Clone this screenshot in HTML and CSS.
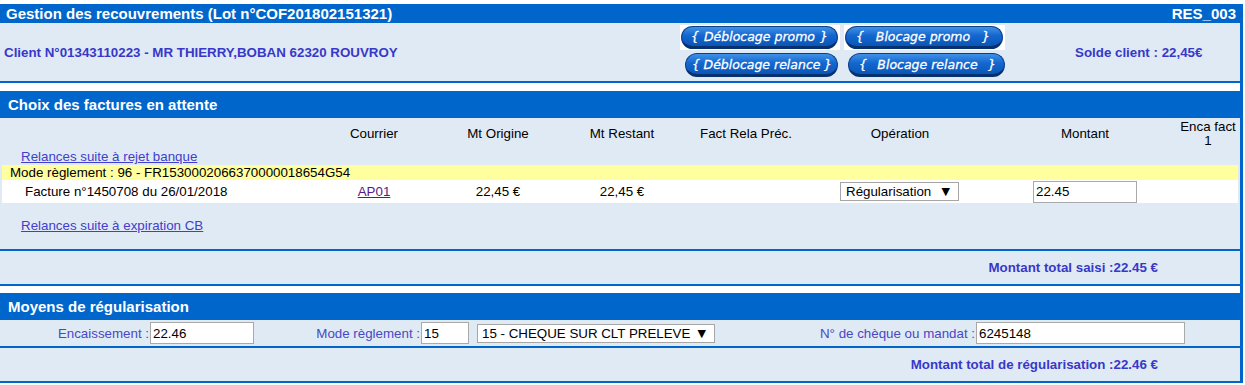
FILE: index.html
```html
<html>
<head>
<title>Gestion des recouvrements</title>
<meta http-equiv="Content-Type" content="text/html; charset=UTF-8">
<link rel="stylesheet" href="styles.css">
</head>
<body>
<div class="page">

 <div class="section">
  <div class="title-bar title-bar-small">
   <span>Gestion des recouvrements (Lot n°COF201802151321)</span>
   <span>RES_003</span>
  </div>
  <div class="client-row">
   <div class="client-text">Client N°01343110223 - MR THIERRY,BOBAN 62320 ROUVROY</div>
   <div class="button-block">
    <div class="button-line">
     <span class="pill-frame"><a class="pill pill-a" href="#"><span>{</span><span>Déblocage promo</span><span>}</span></a></span>
     <span class="pill-frame"><a class="pill pill-b" href="#"><span>{</span><span>Blocage promo</span><span>}</span></a></span>
    </div>
    <div class="button-line">
     <a class="pill pill-c" href="#"><span>{</span><span>Déblocage relance</span><span>}</span></a>
     <a class="pill pill-d" href="#"><span>{</span><span>Blocage relance</span><span>}</span></a>
    </div>
   </div>
   <div class="solde-text">Solde client : 22,45€</div>
  </div>
 </div>

 <div class="section-gap"></div>

 <div class="section">
  <div class="title-bar">Choix des factures en attente</div>
  <div class="invoice-area">
   <div class="invoice-cols invoice-head">
    <div></div>
    <div>Courrier</div>
    <div>Mt Origine</div>
    <div>Mt Restant</div>
    <div>Fact Rela Préc.</div>
    <div>Opération</div>
    <div>Montant</div>
    <div>Enca fact<br>1</div>
   </div>
   <div class="link-line"><a href="#">Relances suite à rejet banque</a></div>
   <div class="mode-line">Mode règlement : 96 - FR1530002066370000018654G54</div>
   <div class="invoice-cols invoice-row">
    <div class="invoice-label">Facture n°1450708 du 26/01/2018</div>
    <div><a class="visited-link" href="#">AP01</a></div>
    <div>22,45 €</div>
    <div>22,45 €</div>
    <div></div>
    <div><span class="fake-select op-select"><span>Régularisation</span><span class="arrow">▼</span></span></div>
    <div><input class="text-input amount-input" type="text" value="22.45"></div>
    <div></div>
   </div>
   <div class="link-line link-line-2"><a href="#">Relances suite à expiration CB</a></div>
  </div>
  <div class="total-row">Montant total saisi :22.45 €</div>
 </div>

 <div class="section-gap section-gap-2"></div>

 <div class="section">
  <div class="title-bar">Moyens de régularisation</div>
  <div class="form-row">
   <label class="form-label">Encaissement :</label>
   <div><input class="text-input enc-input" type="text" value="22.46"></div>
   <label class="form-label">Mode règlement :</label>
   <div class="mode-fields">
    <input class="text-input code-input" type="text" value="15">
    <span class="fake-select mode-select"><span>15 - CHEQUE SUR CLT PRELEVE</span><span class="arrow">▼</span></span>
   </div>
   <label class="form-label">N° de chèque ou mandat :</label>
   <div><input class="text-input cheque-input" type="text" value="6245148"></div>
  </div>
  <div class="total-row">Montant total de régularisation :22.46 €</div>
 </div>

</div>
</body>
</html>
```

FILE: styles.css
```css
body {
 margin: 0;
 padding-top: 4px;
 background-color: #ffffff;
 font-family: "Liberation Sans", Arial, sans-serif;
 font-size: 10pt;
 color: #000000;
}
a:link {
 color: #4040cc;
}
.page {
 width: 1240px;
 border-right: 3px solid #0066cc;
}
.section {
 background-color: #e0eaf5;
}
.section-gap {
 height: 8px;
 background-color: #ffffff;
}
.section-gap-2 {
 height: 7px;
}
.title-bar {
 height: 27px;
 background-color: #0066cc;
 color: #ffffff;
 font-size: 15px;
 font-weight: bold;
 padding-left: 8px;
 display: flex;
 align-items: center;
}
.title-bar-small {
 height: 19px;
 padding-left: 6px;
 padding-right: 4px;
 justify-content: space-between;
}
.client-row {
 height: 58px;
 border-bottom: 2px solid #0066cc;
 display: grid;
 grid-template-columns: 680px 325px 1fr;
 align-items: center;
}
.client-text {
 padding-left: 4px;
 font-weight: bold;
 color: #3838c8;
}
.solde-text {
 padding-left: 70px;
 font-weight: bold;
 color: #3838c8;
}
.button-block {
 align-self: start;
 margin-top: 2px;
 display: flex;
 flex-direction: column;
 gap: 3px;
}
.button-line {
 display: flex;
 align-items: center;
}
.pill-frame {
 background-color: #ffffff;
 padding: 1px 2px 1px 1px;
 margin-right: 4px;
 display: flex;
}
.pill {
 height: 20px;
 box-sizing: border-box;
 border: 1px solid #0a3f8c;
 border-bottom: 3px solid #06306e;
 border-radius: 12px;
 background: linear-gradient(#3f92e6, #1467cf 45%, #0a56b8);
 color: #ffffff;
 font-family: "DejaVu Sans", Verdana, sans-serif;
 font-style: italic;
 font-size: 12.5px;
 -webkit-text-stroke: 0.3px #ffffff;
 text-decoration: none;
 display: flex;
 align-items: center;
 justify-content: space-between;
 padding: 0 9px 0 10px;
}
a.pill:link {
 color: #ffffff;
}
.pill-a {
 width: 157px;
 height: 23px;
 padding-left: 9px;
 padding-right: 9px;
}
.pill-b {
 width: 158px;
 height: 23px;
 padding-left: 10px;
 padding-right: 12px;
}
.pill-c {
 width: 153px;
 height: 24px;
 margin-left: 5px;
 padding: 0 5px 0 6px;
}
.pill-d {
 width: 157px;
 height: 24px;
 margin-left: 10px;
 padding: 0 8px 0 10px;
}
.invoice-area {
 height: 131px;
 border-bottom: 2px solid #0066cc;
 padding: 0 2px;
}
.invoice-cols {
 display: grid;
 grid-template-columns: 310px 124px 124px 124px 124px 184px 186px 60px;
 align-items: center;
 text-align: center;
}
.invoice-head {
 height: 31px;
 line-height: 14px;
}
.link-line {
 height: 16px;
 line-height: 16px;
 padding-left: 19px;
}
.link-line-2 {
 margin-top: 15px;
}
.mode-line {
 height: 15px;
 line-height: 15px;
 background-color: #ffffa0;
 padding-left: 8px;
}
.invoice-row {
 height: 23px;
 background-color: #ffffff;
}
.invoice-label {
 text-align: left;
 padding-left: 23px;
}
.visited-link:link {
 color: #551a8b;
}
.text-input {
 font-family: "Liberation Sans", Arial, sans-serif;
 font-size: 10pt;
 height: 22px;
 box-sizing: border-box;
 border: 1px solid #a9a9a9;
 padding: 1px 2px;
 margin: 0;
 background-color: #ffffff;
 color: #000000;
}
.amount-input {
 width: 104px;
 display: block;
 margin: 0 auto;
}
.fake-select {
 display: flex;
 align-items: center;
 justify-content: space-between;
 box-sizing: border-box;
 border: 1px solid #a6a6a6;
 background-color: #ffffff;
 text-align: left;
}
.arrow {
 font-family: "DejaVu Sans", sans-serif;
 font-size: 11px;
}
.op-select {
 width: 119px;
 height: 19px;
 margin-left: 32px;
 padding: 0 8px 0 5px;
}
.form-row {
 height: 26px;
 border-bottom: 2px solid #0066cc;
 display: grid;
 grid-template-columns: 149px 168px 103px 400px 155px 1fr;
 align-items: center;
}
.form-label {
 justify-self: end;
 white-space: nowrap;
 color: #4848c4;
}
.enc-input {
 width: 104px;
 margin-left: 1px;
}
.mode-fields {
 display: flex;
 align-items: center;
 gap: 8px;
}
.code-input {
 width: 48px;
 margin-left: 1px;
}
.mode-select {
 width: 238px;
 height: 19px;
 padding: 0 8px 0 4px;
}
.cheque-input {
 width: 209px;
 margin-left: 1px;
}
.total-row {
 height: 33px;
 border-bottom: 2px solid #0066cc;
 display: flex;
 align-items: center;
 justify-content: flex-end;
 padding-right: 82px;
 font-weight: bold;
 color: #3838c8;
}
```
